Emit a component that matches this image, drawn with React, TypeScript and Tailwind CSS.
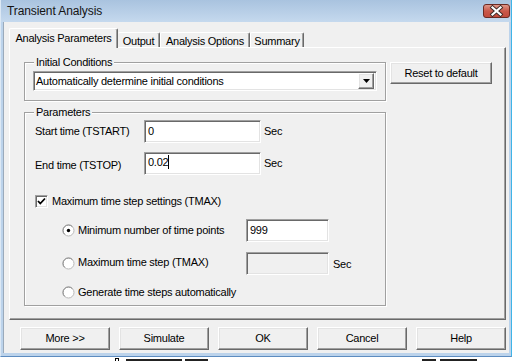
import React from "react";

const raised =
  "border border-t-white border-l-white border-r-[#696969] border-b-[#696969] shadow-[inset_-1px_-1px_0_#a0a0a0,inset_1px_1px_0_#e3e3e3]";
const sunken =
  "border border-t-[#a0a0a0] border-l-[#a0a0a0] border-r-white border-b-white shadow-[inset_1px_1px_0_#696969,inset_-1px_-1px_0_#e3e3e3]";

function CloseBtn() {
  return (
    <svg width="27" height="14" viewBox="0 0 27 14">
      <defs>
        <linearGradient id="cg" x1="0" y1="0" x2="0" y2="1">
          <stop offset="0" stopColor="#e19c8e" />
          <stop offset="0.5" stopColor="#c9584a" />
          <stop offset="1" stopColor="#c24a3c" />
        </linearGradient>
      </defs>
      <rect x="0.5" y="0.5" width="26" height="13" rx="2.5" fill="url(#cg)" stroke="#6b2b24" />
      <path d="M9.5 3.5 L17.5 10.5 M17.5 3.5 L9.5 10.5" stroke="#3b2a28" strokeWidth="4" strokeLinecap="square" />
      <path d="M9.5 3.5 L17.5 10.5 M17.5 3.5 L9.5 10.5" stroke="#ffffff" strokeWidth="2.2" strokeLinecap="square" />
    </svg>
  );
}

function Radio({ checked }: { checked?: boolean }) {
  return (
    <svg width="13" height="13" viewBox="0 0 13 13" className="shrink-0">
      <circle cx="6.5" cy="6.5" r="5.5" fill="#ffffff" stroke="#b8b8b8" />
      <path d="M2.6 10.4 A5.5 5.5 0 0 1 10.4 2.6" fill="none" stroke="#8a8a8a" />
      {checked && <circle cx="6.5" cy="6.5" r="1.7" fill="#000" />}
    </svg>
  );
}

function Checkbox() {
  return (
    <div className={`w-[13px] h-[13px] bg-white shrink-0 flex items-center justify-center ${sunken}`}>
      <svg width="9" height="9" viewBox="0 0 9 9">
        <path d="M1 4 L3.3 6.5 L8 1.5" fill="none" stroke="#000" strokeWidth="1.8" />
      </svg>
    </div>
  );
}

function Group({ label, className, children }: { label: string; className?: string; children?: React.ReactNode }) {
  return (
    <div
      className={`flex flex-col border border-[#a0a0a0] shadow-[inset_1px_1px_0_#fff,1px_1px_0_#fff] ${className ?? ""}`}
    >
      <div className="-mt-[7px] ml-[9px] px-[2px] h-[13px] leading-[13px] bg-[#f0f0f0] self-start">{label}</div>
      {children}
    </div>
  );
}

function Btn({ label, className }: { label: string; className?: string }) {
  return (
    <div className={`bg-[#f0f0f0] flex items-center justify-center ${raised} ${className ?? ""}`}>
      {label}
    </div>
  );
}

export default function App() {
  return (
    <div className="w-[514px] h-[361px] bg-white overflow-hidden font-['Liberation_Sans',Arial,sans-serif] text-[11px] leading-[13px] tracking-[-0.25px] text-black">
      <div className="w-[512px] h-[357px] flex flex-col bg-[#bcd3eb] border-l border-r border-b border-l-[#dce8f4] border-r-[#3fb4e8] border-b-[#5d8cc0]">
        {/* title bar */}
        <div className="h-[22px] shrink-0 flex items-start justify-between pl-[6px] pr-[1px] bg-gradient-to-b from-[#a9c3df] to-[#c5d9ee]">
          <span className="mt-[4px] text-[12px] leading-[14px] tracking-[-0.1px] text-[#141414]">Transient Analysis</span>
          <div className="mt-[4px]">
            <CloseBtn />
          </div>
        </div>
        {/* body */}
        <div className="ml-[2px] mr-[2px] h-[331px] bg-[#f0f0f0] flex flex-col border-l border-[#9aaabb]">
          {/* tabs */}
          <div className="ml-[5px] mt-[6px] h-[19px] flex items-end">
            <div className="relative z-10 w-[109px] h-[20px] -mb-[1px] bg-[#f0f0f0] flex justify-center pt-[3px] border-t border-l border-r border-t-white border-l-white border-r-[#696969] rounded-t-[2px] shadow-[inset_-1px_0_0_#a0a0a0]">
              Analysis Parameters
            </div>
            <div className="w-[42px] h-[15px] flex justify-center pt-[2px] border-t border-r border-t-white border-r-[#696969] rounded-t-[2px] shadow-[inset_-1px_0_0_#a0a0a0]">
              Output
            </div>
            <div className="w-[90px] h-[15px] flex justify-center pt-[2px] border-t border-l border-r border-t-white border-l-white border-r-[#696969] rounded-t-[2px] shadow-[inset_-1px_0_0_#a0a0a0]">
              Analysis Options
            </div>
            <div className="w-[54px] h-[15px] flex justify-center pt-[2px] border-t border-l border-r border-t-white border-l-white border-r-[#696969] rounded-t-[2px] shadow-[inset_-1px_0_0_#a0a0a0]">
              Summary
            </div>
          </div>
          {/* panel */}
          <div className="ml-[5px] w-[497px] h-[273px] flex border border-t-white border-l-white border-r-[#696969] border-b-[#696969] shadow-[inset_-1px_-1px_0_#a0a0a0]">
            <div className="ml-[14px] mt-[14px] flex items-start">
              <div className="w-[362px] flex flex-col">
                <Group label="Initial Conditions" className="h-[39px]">
                  <div className={`ml-[8px] mt-[2px] w-[344px] h-[20px] bg-white flex items-center pl-[2px] pr-[2px] ${sunken}`}>
                    <span>Automatically determine initial conditions</span>
                    <div className={`ml-auto w-[16px] h-[16px] bg-[#f0f0f0] flex items-center justify-center ${raised}`}>
                      <svg width="7" height="4" viewBox="0 0 7 4">
                        <path d="M0 0 H7 L3.5 4 Z" fill="#000" />
                      </svg>
                    </div>
                  </div>
                </Group>
                <Group label="Parameters" className="mt-[11px] h-[194px]">
                  <div className="mt-[1px] h-[23px] flex items-center">
                    <span className="ml-[10px] w-[109px]">Start time (TSTART)</span>
                    <div className={`w-[117px] h-[23px] bg-white flex items-center pl-[3px] ${sunken}`}>0</div>
                    <span className="ml-[3px]">Sec</span>
                  </div>
                  <div className="mt-[9px] h-[23px] flex items-center">
                    <span className="ml-[10px] w-[109px] mt-[3px]">End time (TSTOP)</span>
                    <div className={`w-[117px] h-[23px] bg-white flex items-center pl-[3px] ${sunken}`}>
                      <span className="mb-[3px]">0.02</span>
                      <span className="w-[1px] h-[14px] bg-black mb-[3px]" />
                    </div>
                    <span className="ml-[3px]">Sec</span>
                  </div>
                  <div className="mt-[20px] h-[13px] flex items-center">
                    <div className="ml-[10px]">
                      <Checkbox />
                    </div>
                    <span className="ml-[4px]">Maximum time step settings (TMAX)</span>
                  </div>
                  <div className="mt-[11px] h-[23px] flex items-center">
                    <div className="ml-[37px]">
                      <Radio checked />
                    </div>
                    <span className="ml-[3px] w-[168px]">Minimum number of time points</span>
                    <div className={`w-[83px] h-[23px] bg-white flex items-center pl-[3px] ${sunken}`}>999</div>
                  </div>
                  <div className="mt-[10px] h-[23px] flex items-center">
                    <div className="ml-[37px]">
                      <Radio />
                    </div>
                    <span className="ml-[3px] w-[168px] -mt-[3px]">Maximum time step (TMAX)</span>
                    <div className={`w-[83px] h-[23px] bg-[#f0f0f0] ${sunken}`} />
                    <span className="ml-[4px] mt-[2px]">Sec</span>
                  </div>
                  <div className="mt-[11px] h-[13px] flex items-center">
                    <div className="ml-[37px]">
                      <Radio />
                    </div>
                    <span className="ml-[3px]">Generate time steps automatically</span>
                  </div>
                </Group>
              </div>
              <Btn label="Reset to default" className="ml-[4px] w-[102px] h-[22px]" />
            </div>
          </div>
          {/* bottom buttons */}
          <div className="ml-[16px] mt-[7px] flex gap-[9px]">
            <Btn label="More >>" className="w-[90px] h-[23px]" />
            <Btn label="Simulate" className="w-[90px] h-[23px]" />
            <Btn label="OK" className="w-[90px] h-[23px]" />
            <Btn label="Cancel" className="w-[90px] h-[23px]" />
            <Btn label="Help" className="w-[90px] h-[23px]" />
          </div>
        </div>
      </div>
      {/* background fragments below the window */}
      <div className="mt-[1px] h-[3px] flex items-end">
        <div className="ml-[115px] w-[4px] h-[3px] border border-black border-b-0" />
        <div className="ml-[7px] w-[56px] h-[2px] bg-[#222]" />
        <div className="ml-[3px] w-[23px] h-[2px] bg-[#222]" />
        <div className="ml-[214px] w-[14px] h-[2px] bg-[#222]" />
        <div className="ml-[4px] w-[37px] h-[2px] bg-[#222]" />
      </div>
    </div>
  );
}
